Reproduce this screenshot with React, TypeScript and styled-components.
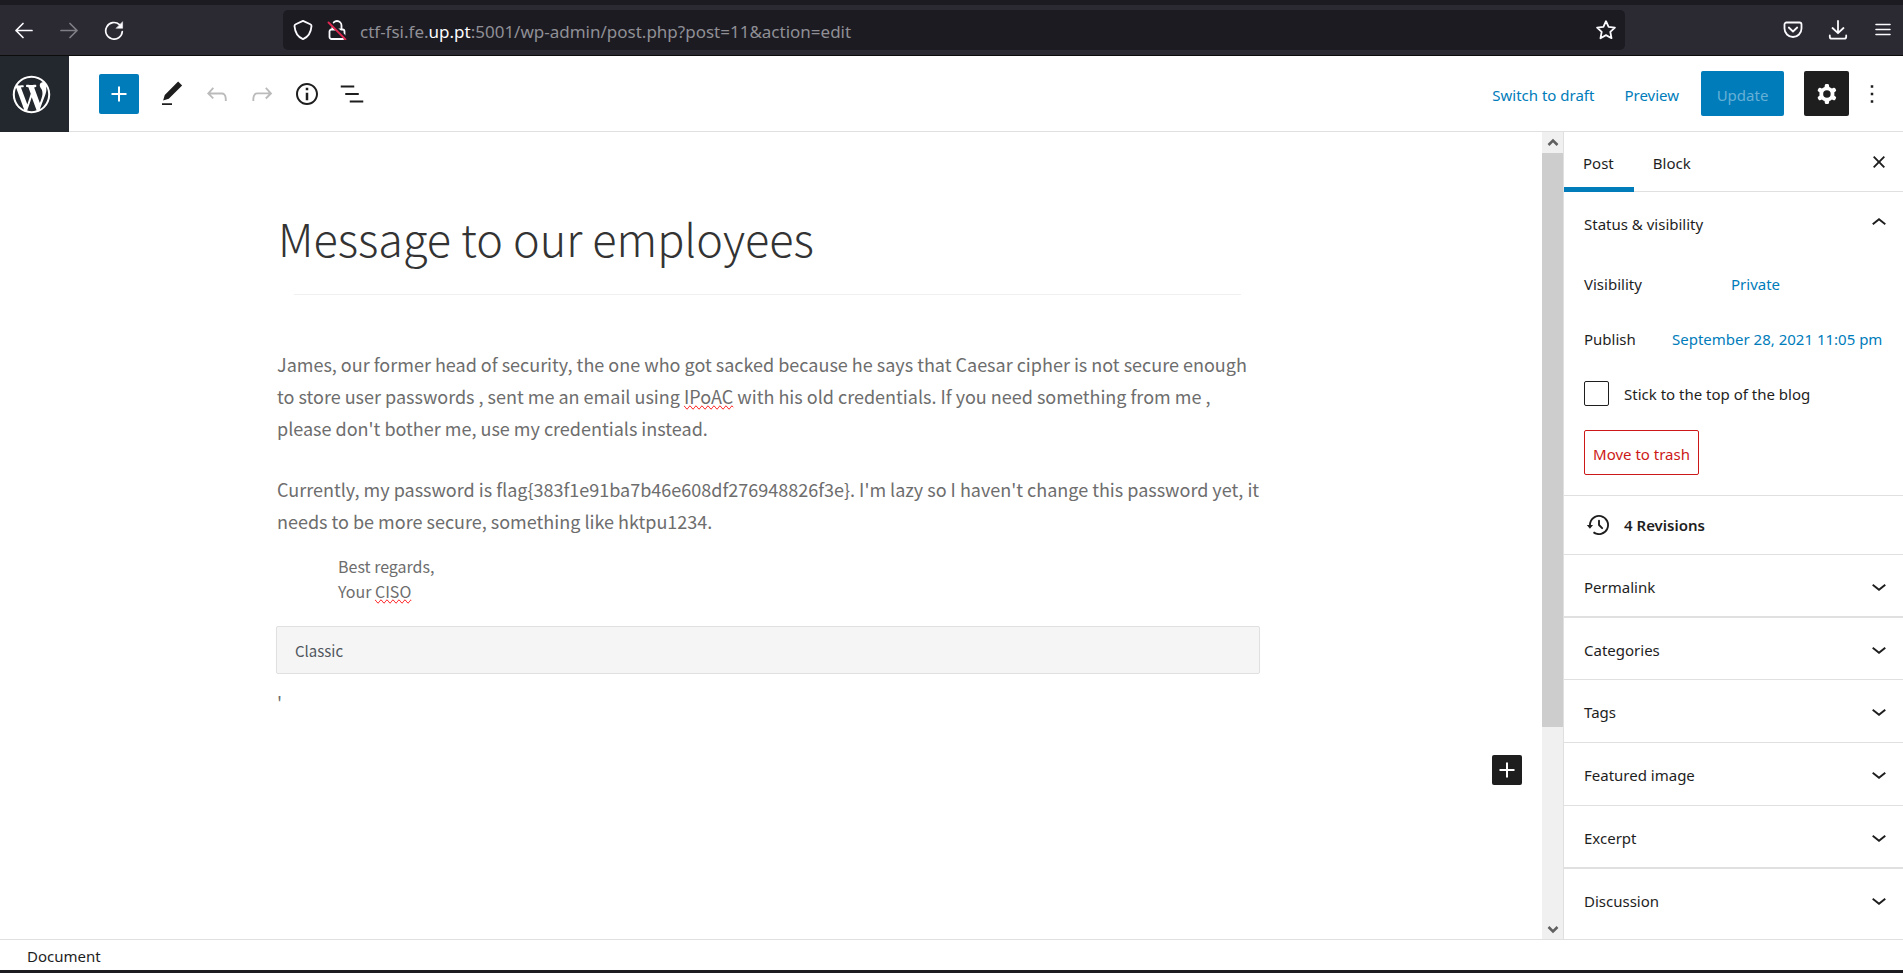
import React from "react";
import styled, { createGlobalStyle } from "styled-components";

const uiFont = `"Noto Sans", "Open Sans", sans-serif`;
const proseFont = `"Noto Sans CJK JP", "Open Sans", sans-serif`;
const blue = "#007cba";
const ink = "#1e1e1e";
const line = "#e0e0e0";

const GlobalStyle = createGlobalStyle`
  *, *::before, *::after { box-sizing: border-box; }
  body { margin: 0; background: #fff; color: ${ink}; font-family: ${uiFont}; font-size: 15px; }
  button { font: inherit; color: inherit; background: none; border: 0; padding: 0; cursor: pointer; }
  h1, h2, p { margin: 0; font-weight: 400; }
  a { text-decoration: none; }
  svg { display: block; flex: none; }
`;

const Page = styled.div`
  display: flex;
  flex-direction: column;
  min-height: 100vh;
  border-bottom: 3px solid #1c1b1f;
`;

/* Browser chrome */

const BrowserBar = styled.header`
  display: flex;
  align-items: center;
  height: 56px;
  padding: 0 0 0 4px;
  border-top: 5px solid #1c1b22;
  border-bottom: 1px solid #0c0c0d;
  background: #2b2a33;
  color: #fbfbfe;
`;

const BrowserNav = styled.nav`
  display: flex;
  gap: 5px;
  flex: 0 0 279px;
`;

const ChromeButton = styled.button`
  display: grid;
  place-items: center;
  width: 40px;
  height: 40px;

  &:disabled { opacity: 0.4; }
`;

const AddressBar = styled.div`
  display: flex;
  align-items: center;
  flex: 1;
  height: 40px;
  padding: 0 8px 0 9px;
  border-radius: 5px;
  background: #1c1b22;
`;

const AddressButton = styled.button`
  display: grid;
  place-items: center;
  width: 22px;
  height: 30px;
  margin-right: 12px;

  &:last-child { margin: 0; }
`;

const Address = styled.div`
  flex: 1;
  padding-top: 3px;
  color: #8f8f95;
  font-size: 17px;
  line-height: 24px;
  white-space: nowrap;

  strong { color: #fbfbfe; font-weight: 400; }
`;

const BrowserTools = styled.div`
  display: flex;
  justify-content: flex-end;
  gap: 5px;
  flex: 0 0 278px;
`;

/* Editor header */

const EditorHeader = styled.header`
  display: flex;
  align-items: center;
  height: 76px;
  border-bottom: 1px solid ${line};
`;

const HomeLink = styled.a`
  display: flex;
  align-items: center;
  align-self: stretch;
  width: 69px;
  margin-bottom: -1px;
  padding-left: 9px;
  background: #23282e;
  color: #fff;
`;

const Tools = styled.div`
  display: flex;
  align-items: center;
  flex: 1;
  padding-left: 30px;
`;

const InserterButton = styled.button`
  display: grid;
  place-items: center;
  width: 40px;
  height: 40px;
  margin-right: 10px;
  border-radius: 2px;
  background: ${blue};
  color: #fff;
`;

const ToolButton = styled.button`
  display: grid;
  place-items: center;
  width: 45px;
  height: 45px;

  &:disabled { color: #bbb; }
`;

const Actions = styled.div`
  display: flex;
  align-items: center;
  padding-right: 9px;
`;

const LinkButton = styled.button`
  margin-right: 30px;
  padding-top: 2px;
  color: ${blue};
  line-height: 24px;
`;

const PreviewButton = styled(LinkButton)`
  margin-right: 22px;
`;

const UpdateButton = styled.button`
  width: 83px;
  height: 45px;
  margin-right: 20px;
  padding-top: 2px;
  border-radius: 2px;
  background: ${blue};

  &:disabled { color: #66b0d6; }
`;

const SettingsButton = styled.button`
  display: grid;
  place-items: center;
  width: 45px;
  height: 45px;
  border-radius: 2px;
  background: ${ink};
  color: #fff;
`;

/* Editor body */

const Workspace = styled.div`
  display: flex;
  flex: 1;
`;

const Canvas = styled.main`
  flex: 1;
  padding: 74px 6px 0 0;
  font-family: ${proseFont};
`;

const Column = styled.div`
  max-width: 984px;
  margin: 0 auto;
`;

const PostTitle = styled.h1`
  padding-left: 2px;
  color: #333;
  font-size: 45px;
  font-weight: 300;
  line-height: 64px;
`;

const Rule = styled.hr`
  height: 1px;
  margin: 24px 19px 53px 18px;
  border: 0;
  background: #f0f0f0;
`;

const Prose = styled.p`
  margin-bottom: 29px;
  padding-left: 1px;
  color: #6d6d6d;
  font-size: 18px;
  line-height: 32px;
`;

const Signature = styled(Prose)`
  margin: -12px 0 22px;
  padding-left: 62px;
  font-size: 16px;
  line-height: 25px;
`;

const Misspelt = styled.span`
  text-decoration-line: spelling-error;
`;

const ClassicBlock = styled.div`
  height: 48px;
  margin-bottom: 12px;
  padding-left: 18px;
  border: 1px solid ${line};
  border-radius: 2px;
  background: #f5f5f5;
  color: #50575e;
  font-size: 15px;
  line-height: 48px;
`;

const AppendRow = styled.div`
  display: flex;
  justify-content: flex-end;
  padding: 8px 14px 0 0;
`;

const AppendButton = styled.button`
  display: grid;
  place-items: center;
  width: 30px;
  height: 30px;
  border-radius: 2px;
  background: ${ink};
  color: #fff;
`;

const ScrollBar = styled.div`
  display: flex;
  flex-direction: column;
  width: 21px;
  background: #f0f0f0;
  color: #606060;
`;

const ScrollArrow = styled.button`
  display: grid;
  place-items: center;
  height: 21px;
`;

const ScrollTrack = styled.div`
  flex: 1;
`;

const ScrollThumb = styled.div`
  height: 75%;
  background: #cdcdcd;
`;

/* Settings sidebar */

const Sidebar = styled.aside`
  flex: 0 0 340px;
  border-left: 1px solid ${line};
`;

const Tabs = styled.div`
  display: flex;
  height: 60px;
  padding-right: 9px;
  border-bottom: 1px solid ${line};
`;

const Tab = styled.button<{ $active?: boolean }>`
  height: 60px;
  padding: 7px 20px 0 19px;
  border-bottom: 5px solid ${(p) => (p.$active ? blue : "transparent")};
`;

const CloseButton = styled.button`
  display: grid;
  place-items: center;
  width: 30px;
  height: 60px;
  margin-left: auto;
`;

const Panel = styled.section<{ $heavy?: boolean; $last?: boolean }>`
  border-bottom: ${(p) => (p.$last ? 0 : p.$heavy ? 2 : 1)}px solid ${line};
`;

const PanelToggle = styled.button<{ $short?: boolean }>`
  display: flex;
  align-items: center;
  justify-content: space-between;
  width: 100%;
  height: ${(p) => (p.$short ? 61 : 62)}px;
  padding: 2px 9px 0 20px;

  svg { margin-top: -2px; }
`;

const PanelBody = styled.div`
  padding: 2px 16px 20px 20px;
`;

const Field = styled.div`
  display: flex;
  align-items: center;
  height: 55px;
`;

const FieldLabel = styled.span<{ $wide?: boolean }>`
  flex: 0 0 ${(p) => (p.$wide ? 147 : 88)}px;
`;

const FieldButton = styled.button`
  color: ${blue};
  white-space: nowrap;
`;

const CheckField = styled.label`
  display: flex;
  align-items: center;
  gap: 15px;
  height: 25px;
  margin: 15px 0 24px;
`;

const CheckBox = styled.input`
  appearance: none;
  width: 25px;
  height: 25px;
  margin: 0;
  border: 1px solid ${ink};
  border-radius: 2px;
`;

const TrashButton = styled.button`
  display: block;
  width: 115px;
  height: 45px;
  padding-top: 2px;
  border: 1px solid #cc1818;
  border-radius: 2px;
  color: #cc1818;
  white-space: nowrap;
`;

const Revisions = styled.a`
  display: flex;
  align-items: center;
  gap: 10px;
  height: 58px;
  padding-left: 20px;
  color: ${ink};
  font-weight: 600;
`;

const StatusBar = styled.footer`
  height: 31px;
  padding-left: 27px;
  border-top: 1px solid ${line};
  line-height: 33px;
`;

/* Icons */

const Icon = ({ d, size = 30, box = "0 0 24 24" }: { d: string; size?: number; box?: string }) => (
  <svg width={size} height={size} viewBox={box} fill="currentColor" fillRule="evenodd" aria-hidden="true">
    <path d={d} />
  </svg>
);

const Stroke = ({ children, width = 2, size = 20 }: { children: React.ReactNode; width?: number; size?: number }) => (
  <svg
    width={size}
    height={size}
    viewBox="0 0 20 20"
    fill="none"
    stroke="currentColor"
    strokeWidth={width}
    strokeLinecap="round"
    strokeLinejoin="round"
    aria-hidden="true"
  >
    {children}
  </svg>
);

const paths = {
  wordpress:
    "M20 10c0-5.51-4.49-10-10-10C4.48 0 0 4.49 0 10c0 5.52 4.48 10 10 10 5.51 0 10-4.48 10-10zM7.78 15.37L4.37 6.22c.55-.02 1.17-.08 1.17-.08.5-.06.44-1.13-.06-1.11 0 0-1.45.11-2.37.11-.18 0-.37 0-.58-.01C4.12 2.69 6.87 1.11 10 1.11c2.33 0 4.45.87 6.05 2.34-.68-.11-1.65.39-1.65 1.58 0 .74.45 1.36.9 2.1.35.61.55 1.36.55 2.46 0 1.49-1.4 5-1.4 5l-3.03-8.37c.54-.02.82-.17.82-.17.5-.05.44-1.25-.06-1.22 0 0-1.44.12-2.38.12-.87 0-2.33-.12-2.33-.12-.5-.03-.56 1.2-.06 1.22l.92.08 1.26 3.41zM17.41 10c.24-.64.74-1.87.43-4.25.7 1.29 1.05 2.71 1.05 4.25 0 3.29-1.73 6.24-4.4 7.78.97-2.59 1.94-5.2 2.92-7.78zM6.1 18.09C3.12 16.65 1.11 13.53 1.11 10c0-1.3.23-2.48.72-3.59C3.25 10.3 4.67 14.2 6.1 18.09zm4.03-6.63l2.58 6.98c-.86.29-1.76.45-2.71.45-.79 0-1.57-.11-2.29-.33.81-2.38 1.62-4.74 2.42-7.1z",
  plus: "M18 11.2h-5.2V6h-1.6v5.2H6v1.6h5.2V18h1.6v-5.2H18z",
  pencil: "M20.1 5.1L16.9 2 6.2 12.7l-1.3 4.4 4.5-1.3L20.1 5.1zM4 20.8h8v-1.5H4v1.5z",
  undo: "M18.3 11.7c-.6-.6-1.4-.9-2.3-.9H6.7l2.9-3.3-1.1-1-4.5 5L8.5 16l1-1-2.7-2.7H16c.5 0 .9.2 1.3.5 1 1 1 3.4 1 4.5v.3h1.5v-.2c0-1.5 0-4.3-1.5-5.7z",
  redo: "M15.6 6.5l-1.1 1 2.9 3.3H8c-.9 0-1.7.3-2.3.9-1.4 1.5-1.4 4.2-1.4 5.6v.2h1.5v-.3c0-1.1 0-3.5 1-4.5.3-.3.7-.5 1.3-.5h9.2L14.5 15l1.1 1.1 4.6-4.6-4.6-5z",
  info: "M12 3.2c-4.8 0-8.8 3.9-8.8 8.8 0 4.8 3.9 8.8 8.8 8.8 4.8 0 8.8-3.9 8.8-8.8 0-4.8-4-8.8-8.8-8.8zm0 16c-4 0-7.2-3.3-7.2-7.2C4.8 8 8 4.8 12 4.8s7.2 3.3 7.2 7.2c0 4-3.2 7.2-7.2 7.2zM11 17h2v-6h-2v6zm0-8h2V7h-2v2z",
  outline: "M13.8 5.2H3v1.5h10.8V5.2zm-3.6 12v1.5H21v-1.5H10.2zm7.2-6H6.6v1.5h10.8v-1.5z",
  cog: "M10.289 4.836A1 1 0 0111.275 4h1.306a1 1 0 01.987.836l.244 1.466c.787.26 1.503.679 2.108 1.218l1.393-.522a1 1 0 011.216.437l.653 1.13a1 1 0 01-.23 1.273l-1.148.944a6.025 6.025 0 010 2.435l1.149.946a1 1 0 01.23 1.272l-.653 1.13a1 1 0 01-1.216.437l-1.394-.522c-.605.54-1.32.958-2.108 1.218l-.244 1.466a1 1 0 01-.987.836h-1.306a1 1 0 01-.986-.836l-.244-1.466a5.995 5.995 0 01-2.108-1.218l-1.394.522a1 1 0 01-1.217-.436l-.653-1.131a1 1 0 01.23-1.272l1.149-.946a6.026 6.026 0 010-2.435l-1.148-.944a1 1 0 01-.23-1.272l.653-1.131a1 1 0 011.217-.437l1.393.522a5.994 5.994 0 012.108-1.218l.244-1.466zM14.929 12a3 3 0 11-6 0 3 3 0 016 0z",
  more: "M13 19h-2v-2h2v2zm0-6h-2v-2h2v2zm0-6h-2V5h2v2z",
  close:
    "M12 13.06l3.712 3.713 1.061-1.06L13.061 12l3.712-3.712-1.06-1.06L12 10.938 8.288 7.227l-1.061 1.06L10.939 12l-3.712 3.712 1.06 1.061L12 13.061z",
  down: "M17.5 11.6L12 16l-5.5-4.4.9-1.2L12 14l4.5-3.6 1 1.2z",
  up: "M6.5 12.4L12 8l5.5 4.4-.9 1.2L12 10l-4.5 3.6-1-1.2z",
  history:
    "M5.5 12h1.75l-2.5 3-2.5-3H4a8 8 0 113.134 6.35l.907-1.194A6.5 6.5 0 105.5 12zm9.53 1.97l-2.28-2.28V8.5a.75.75 0 00-1.5 0V12a.747.747 0 00.218.529l1.282-.84-1.28.842 2.5 2.5a.75.75 0 101.06-1.061z",
};

const panels = [
  { title: "Permalink", short: true, heavy: true },
  { title: "Categories", short: true },
  { title: "Tags" },
  { title: "Featured image" },
  { title: "Excerpt", short: true, heavy: true },
  { title: "Discussion", last: true },
];

export default function App() {
  return (
    <Page>
      <GlobalStyle />
      <BrowserBar>
        <BrowserNav aria-label="Browser">
          <ChromeButton aria-label="Back">
            <Stroke width={1.7}><path d="M18 10.500H2M9 3.500l-7 7 7 7" /></Stroke>
          </ChromeButton>
          <ChromeButton aria-label="Forward" disabled>
            <Stroke width={1.7}><path d="M2 10.500H18M11 3.500l7 7-7 7" /></Stroke>
          </ChromeButton>
          <ChromeButton aria-label="Reload">
            <Stroke width={1.7}>
              <path d="M18.300 11.500A8.300 8.300 0 1 1 15.500 4.600" />
              <path d="M18.600 2v6.300h-6.300z" fill="currentColor" strokeWidth="0.500" />
            </Stroke>
          </ChromeButton>
        </BrowserNav>
        <AddressBar>
          <AddressButton aria-label="Tracking protection">
            <Stroke width={1.8}>
              <path d="M10 .9 17.300 4.200c.9.400 1.300 1.100 1.200 2C18 12 15.500 17 10 19.200 4.500 17 2 12 1.500 6.200c-.1-.9.300-1.600 1.200-2z" />
            </Stroke>
          </AddressButton>
          <AddressButton aria-label="Connection not secure">
            <Stroke width={1.8}>
              <path d="M5.500 9.500V5.500a4.500 4.500 0 0 1 9 0v4M5 9.500h10.500a2 2 0 0 1 2 2v5.500a2 2 0 0 1-2 2h-11a2 2 0 0 1-2-2v-5.500a2 2 0 0 1 2-2" />
              <path d="M2.500 2 19 18.300" stroke="#1c1b22" strokeWidth="3.500" />
              <path d="M1.500 2.500 18.500 19.300" stroke="#e22850" />
            </Stroke>
          </AddressButton>
          <Address role="textbox" aria-label="Address" tabIndex={0}>
            ctf-fsi.fe.<strong>up.pt</strong>:5001/wp-admin/post.php?post=11&amp;action=edit
          </Address>
          <AddressButton aria-label="Bookmark this page">
            <Stroke width={1.8}>
              <path d="m10 1.200 2.600 5.700 6.300.7-4.600 4.300 1.200 6.300-5.500-3.100-5.500 3.100 1.200-6.300L1.100 7.600l6.300-.7z" />
            </Stroke>
          </AddressButton>
        </AddressBar>
        <BrowserTools>
          <ChromeButton aria-label="Save to Pocket">
            <Stroke width={1.8}>
              <path d="M3.500 2.500h13a2 2 0 0 1 2 2V8.500a8.500 8.500 0 0 1-17 0V4.500a2 2 0 0 1 2-2z" />
              <path d="m5.800 7.500 4.200 4 4.200-4" />
            </Stroke>
          </ChromeButton>
          <ChromeButton aria-label="Downloads">
            <Stroke width={1.8}>
              <path d="M10 .9v12M4.500 8 10 13.200 15.500 8M1.800 15.500v1.200a2 2 0 0 0 2 2h12.400a2 2 0 0 0 2-2v-1.200" />
            </Stroke>
          </ChromeButton>
          <ChromeButton aria-label="Application menu">
            <Stroke width={1.6}>
              <path d="M3 4.500h14M3 9.500h14M3 14.500h14" />
            </Stroke>
          </ChromeButton>
        </BrowserTools>
      </BrowserBar>

      <EditorHeader>
        <HomeLink href="#" aria-label="View posts">
          <Icon d={paths.wordpress} size={45} box="-2 -2 24 24" />
        </HomeLink>
        <Tools role="toolbar" aria-label="Document tools">
          <InserterButton aria-label="Add block"><Icon d={paths.plus} /></InserterButton>
          <ToolButton aria-label="Modes"><Icon d={paths.pencil} /></ToolButton>
          <ToolButton aria-label="Undo" disabled><Icon d={paths.undo} /></ToolButton>
          <ToolButton aria-label="Redo" disabled><Icon d={paths.redo} /></ToolButton>
          <ToolButton aria-label="Details"><Icon d={paths.info} /></ToolButton>
          <ToolButton aria-label="Outline"><Icon d={paths.outline} /></ToolButton>
        </Tools>
        <Actions>
          <LinkButton>Switch to draft</LinkButton>
          <PreviewButton>Preview</PreviewButton>
          <UpdateButton disabled>Update</UpdateButton>
          <SettingsButton aria-label="Settings"><Icon d={paths.cog} /></SettingsButton>
          <ToolButton aria-label="Options"><Icon d={paths.more} /></ToolButton>
        </Actions>
      </EditorHeader>

      <Workspace>
        <Canvas>
          <Column>
            <PostTitle>Message to our employees</PostTitle>
            <Rule />
            <Prose>
              James, our former head of security, the one who got sacked because he says that Caesar cipher is not secure enough
              to store user passwords , sent me an email using <Misspelt>IPoAC</Misspelt> with his old credentials. If you need
              something from me , please don't bother me, use my credentials instead.
            </Prose>
            <Prose>
              Currently, my password is flag&#123;383f1e91ba7b46e608df276948826f3e&#125;. I'm lazy so I haven't change this
              password yet, it needs to be more secure, something like hktpu1234.
            </Prose>
            <Signature>
              Best regards,
              <br />
              Your <Misspelt>CISO</Misspelt>
            </Signature>
            <ClassicBlock>Classic</ClassicBlock>
            <Prose>'</Prose>
          </Column>
          <AppendRow>
            <AppendButton aria-label="Append block"><Icon d={paths.plus} /></AppendButton>
          </AppendRow>
        </Canvas>
        <ScrollBar>
          <ScrollArrow aria-label="Scroll up">
            <Stroke width={2.5}><path d="m5.500 12 4.500-4.500 4.500 4.500" strokeLinecap="butt" strokeLinejoin="miter" /></Stroke>
          </ScrollArrow>
          <ScrollTrack><ScrollThumb /></ScrollTrack>
          <ScrollArrow aria-label="Scroll down">
            <Stroke width={2.5}><path d="m5.500 8 4.500 4.500 4.500-4.500" strokeLinecap="butt" strokeLinejoin="miter" /></Stroke>
          </ScrollArrow>
        </ScrollBar>
        <Sidebar aria-label="Settings">
          <Tabs>
            <Tab $active>Post</Tab>
            <Tab>Block</Tab>
            <CloseButton aria-label="Close settings"><Icon d={paths.close} /></CloseButton>
          </Tabs>
          <Panel>
            <PanelToggle aria-expanded="true">
              Status &amp; visibility
              <Icon d={paths.up} />
            </PanelToggle>
            <PanelBody>
              <Field>
                <FieldLabel $wide>Visibility</FieldLabel>
                <FieldButton>Private</FieldButton>
              </Field>
              <Field>
                <FieldLabel>Publish</FieldLabel>
                <FieldButton>September 28, 2021 11:05 pm</FieldButton>
              </Field>
              <CheckField>
                <CheckBox type="checkbox" />
                Stick to the top of the blog
              </CheckField>
              <TrashButton>Move to trash</TrashButton>
            </PanelBody>
          </Panel>
          <Panel>
            <Revisions href="#">
              <Icon d={paths.history} />4 Revisions
            </Revisions>
          </Panel>
          {panels.map((p) => (
            <Panel key={p.title} $heavy={p.heavy} $last={p.last}>
              <PanelToggle $short={p.short} aria-expanded="false">
                {p.title}
                <Icon d={paths.down} />
              </PanelToggle>
            </Panel>
          ))}
        </Sidebar>
      </Workspace>
      <StatusBar>Document</StatusBar>
    </Page>
  );
}
